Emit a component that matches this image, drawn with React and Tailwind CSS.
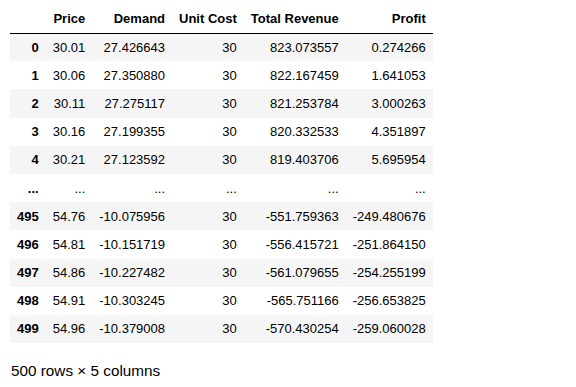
import React from "react";

const rows = [
  ["0", "30.01", "27.426643", "30", "823.073557", "0.274266"],
  ["1", "30.06", "27.350880", "30", "822.167459", "1.641053"],
  ["2", "30.11", "27.275117", "30", "821.253784", "3.000263"],
  ["3", "30.16", "27.199355", "30", "820.332533", "4.351897"],
  ["4", "30.21", "27.123592", "30", "819.403706", "5.695954"],
  ["...", "...", "...", "...", "...", "..."],
  ["495", "54.76", "-10.075956", "30", "-551.759363", "-249.480676"],
  ["496", "54.81", "-10.151719", "30", "-556.415721", "-251.864150"],
  ["497", "54.86", "-10.227482", "30", "-561.079655", "-254.255199"],
  ["498", "54.91", "-10.303245", "30", "-565.751166", "-256.653825"],
  ["499", "54.96", "-10.379008", "30", "-570.430254", "-259.060028"],
];

const headers = ["", "Price", "Demand", "Unit Cost", "Total Revenue", "Profit"];

export default function App() {
  return (
    <div
      className="w-[576px] h-[387px] bg-white text-black overflow-hidden"
      style={{ fontFamily: '"Liberation Sans", Arial, sans-serif' }}
    >
      <table className="ml-[10px] mt-[5px] border-collapse text-[13px] leading-[15px]">
        <thead>
          <tr className="h-[28px] border-b border-black">
            {headers.map((h, i) => (
              <th key={i} className="px-[7px] text-right font-bold align-middle whitespace-nowrap">
                {h}
              </th>
            ))}
          </tr>
        </thead>
        <tbody>
          {rows.map((r, ri) => (
            <tr key={ri} className={"h-[28.2px] " + (ri % 2 === 0 ? "bg-[#f5f5f5]" : "bg-white")}>
              {r.map((c, ci) =>
                ci === 0 ? (
                  <th key={ci} className="px-[7px] text-right font-bold align-middle whitespace-nowrap">
                    {c}
                  </th>
                ) : (
                  <td key={ci} className="px-[7px] text-right align-middle whitespace-nowrap">
                    {c}
                  </td>
                )
              )}
            </tr>
          ))}
        </tbody>
      </table>
      <p className="ml-[11px] mt-[19px] text-[15.3px] leading-[18px]">500 rows × 5 columns</p>
    </div>
  );
}
